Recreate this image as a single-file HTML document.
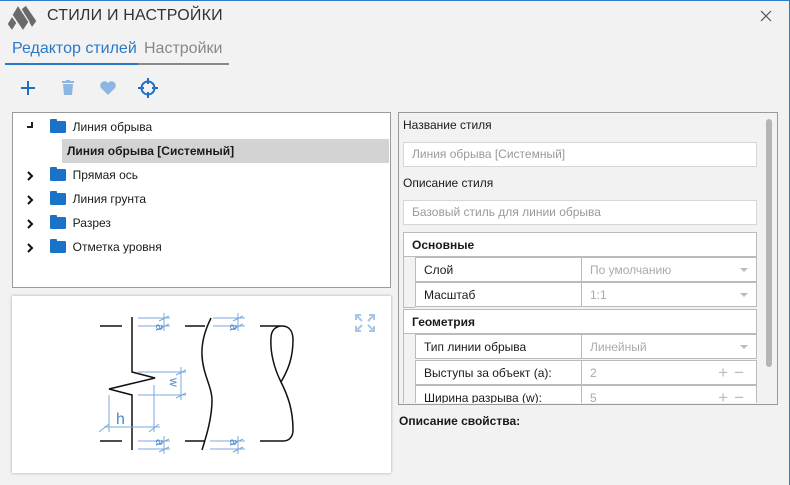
<!DOCTYPE html>
<html><head><meta charset="utf-8"><style>
*{box-sizing:border-box;margin:0;padding:0}
body{width:790px;height:485px;overflow:hidden;background:#f3f2f3;font-family:"Segoe UI","Liberation Sans",sans-serif;font-size:12px;color:#1a1a1a;position:relative}
.win{position:absolute;left:0;top:0;width:790px;height:485px;border-right:1px solid #2b7bd0;border-top:1px solid #2b7bd0}
.abs{position:absolute}
.row{position:absolute;left:0;height:24px;line-height:24px;white-space:nowrap}
.fold{display:inline-block;width:16px;height:12px;background:#1a73c9;border-radius:1px;vertical-align:middle;position:relative;top:-1px}
.fold:before{content:"";position:absolute;left:0;top:-2px;width:7px;height:3px;background:#1a73c9;border-radius:1px 1px 0 0}
.chev{display:inline-block;width:25px;vertical-align:middle}
.inp{position:absolute;left:403px;width:354px;height:25px;border:1px solid #d6d6d6;background:#fff;color:#999;padding-left:8px;line-height:23px}
.lbl{position:absolute;left:403px}
.cell{position:absolute;height:25px;line-height:24px;border:1px solid #bbb;background:#fff;padding-left:8px;white-space:nowrap;overflow:hidden}
.v{color:#aaa}
.arr{position:absolute;right:8px;top:10px;width:0;height:0;border-left:4px solid transparent;border-right:4px solid transparent;border-top:4px solid #bbb}
.pm{position:absolute;right:6px;top:0;color:#bbb;font-size:17px;letter-spacing:6px}
</style></head><body>
<div class="win"></div>
<!-- logo -->
<svg class="abs" style="left:0;top:0" width="42" height="34" viewBox="0 0 42 34">
<g fill="#6a6a6a" stroke="#f3f2f3" stroke-width="1.2" stroke-linejoin="round">
<polygon points="21,9 26,5 37,21 32,28"/>
<polygon points="12,15 18,5 29,22 23,31"/>
<polygon points="7,24 12,16 17,23 12,31"/>
</g>
</svg>
<div class="abs" style="left:47px;top:7px;font-size:16px;color:#333;letter-spacing:0.2px">СТИЛИ И НАСТРОЙКИ</div>
<svg class="abs" style="left:760px;top:10px" width="12" height="12"><path d="M1 1L11 11M11 1L1 11" stroke="#555" stroke-width="1.2"/></svg>
<!-- tabs -->
<div class="abs" style="left:12px;top:40px;font-size:16px;color:#2a79c9">Редактор стилей</div>
<div class="abs" style="left:144px;top:40px;font-size:16px;color:#888">Настройки</div>
<div class="abs" style="left:5px;top:63px;width:133px;height:2px;background:#2a79c9"></div>
<div class="abs" style="left:138px;top:63px;width:91px;height:2px;background:#888"></div>
<!-- toolbar -->
<svg class="abs" style="left:20px;top:80px" width="16" height="16"><path d="M8 1V15M1 8H15" stroke="#1f6fc2" stroke-width="2"/></svg>
<svg class="abs" style="left:61px;top:80px" width="14" height="16"><rect x="1" y="1" width="12" height="2" fill="#8db6e3"/><rect x="5" y="0" width="4" height="2" fill="#8db6e3"/><path d="M2 4H12L11 15H3Z" fill="#8db6e3"/></svg>
<svg class="abs" style="left:99px;top:81px" width="18" height="15"><path d="M9 14L2 7A4 4 0 0 1 9 2A4 4 0 0 1 16 7Z" fill="#8db6e3"/></svg>
<svg class="abs" style="left:138px;top:78px" width="20" height="20"><circle cx="10" cy="10" r="6.5" fill="none" stroke="#1f6fc2" stroke-width="2"/><path d="M10 0V6M10 14V20M0 10H6M14 10H20" stroke="#1f6fc2" stroke-width="2"/></svg>
<!-- tree -->
<div class="abs" style="left:12px;top:112px;width:379px;height:176px;background:#fff;border:1px solid #9a9a9a">
 <div class="abs" style="left:49px;top:26px;width:327px;height:24px;background:#d3d3d3"></div>
 <svg class="abs" style="left:12px;top:6px" width="10" height="10"><path d="M7 3V8H2" stroke="#222" stroke-width="2" fill="none"/></svg>
 <div class="row" style="top:2px;left:37px"><span class="fold"></span>&nbsp; Линия обрыва</div>
 <div class="row" style="top:26px;left:54px;font-weight:bold">Линия обрыва [Системный]</div>
 <div class="row" style="top:50px;left:12px"><svg class="chev" width="25" height="10"><path d="M3 1L7 5L3 9" stroke="#111" stroke-width="2" fill="none"/></svg><span class="fold"></span>&nbsp; Прямая ось</div>
 <div class="row" style="top:74px;left:12px"><svg class="chev" width="25" height="10"><path d="M3 1L7 5L3 9" stroke="#111" stroke-width="2" fill="none"/></svg><span class="fold"></span>&nbsp; Линия грунта</div>
 <div class="row" style="top:98px;left:12px"><svg class="chev" width="25" height="10"><path d="M3 1L7 5L3 9" stroke="#111" stroke-width="2" fill="none"/></svg><span class="fold"></span>&nbsp; Разрез</div>
 <div class="row" style="top:122px;left:12px"><svg class="chev" width="25" height="10"><path d="M3 1L7 5L3 9" stroke="#111" stroke-width="2" fill="none"/></svg><span class="fold"></span>&nbsp; Отметка уровня</div>
</div>
<!-- preview -->
<div class="abs" style="left:12px;top:296px;width:379px;height:177px;background:#fff;box-shadow:0 0 3px rgba(0,0,0,.3)"></div>
<svg class="abs" style="left:0;top:0" width="400" height="485">
<g stroke="#111" stroke-width="1.5" fill="none">
<path d="M100 326H122M132 317V372L155 378L109 389L132 395V450M100 441H122"/>
<path d="M185 326H205M185 441H205M211 318C190 360 212 380 212 400C212 420 205 440 202 450"/>
<path d="M260 326H282C290 326 293 332 293 340C293 358 288 370 281 382C274 368 270 352 271 338C271 330 276 326 282 326"/>
<path d="M281 382C288 396 293 410 293 430C293 437 289 441 283 441H260"/>
</g>
<g stroke="#7aa8dc" stroke-width="1" fill="none">
<path d="M138 318H170M138 326H170M164 313V331M159 321L169 316M159 329L169 324"/>
<path d="M138 441H170M138 449H170M164 436V454M159 444L169 439M159 452L169 447"/>
<path d="M213 318H245M213 326H245M238 313V331M233 321L243 316M233 329L243 324"/>
<path d="M210 441H245M210 449H245M238 436V454M233 444L243 439M233 452L243 447"/>
<path d="M138 372H186M138 395H186M181 367V400M176 375L186 370M176 398L186 393"/>
<path d="M109 395V432M154 385V432M104 427H160M99 432L109 424M149 432L159 424"/>
</g>
<g fill="#4a86cc" font-family="Liberation Sans" font-size="12">
<text x="148" y="328" transform="rotate(90 154 330)">a</text>
<text x="148" y="443" transform="rotate(90 154 445)">a</text>
<text x="222" y="328" transform="rotate(90 228 330)">a</text>
<text x="222" y="443" transform="rotate(90 228 445)">a</text>
<text x="166" y="386" transform="rotate(90 172 384)">w</text>
<text x="116" y="424" font-size="16">h</text>
</g>
<g stroke="#a8c6ea" stroke-width="2" fill="none">
<path d="M356 320V315H361M374 320V315H369M356 326V331H361M374 326V331H369M357 316L362 321M373 316L368 321M357 330L362 325M373 330L368 325"/>
</g>
</svg>
<!-- right panel -->
<div class="abs" style="left:398px;top:112px;width:380px;height:293px;background:#f3f2f3;border:1px solid #9a9a9a"></div>
<div class="abs" style="left:766px;top:119px;width:6px;height:248px;background:#b5b5b5;border-radius:3px"></div>
<div class="lbl" style="top:118px">Название стиля</div>
<div class="inp" style="top:142px">Линия обрыва [Системный]</div>
<div class="lbl" style="top:176px">Описание стиля</div>
<div class="inp" style="top:200px">Базовый стиль для линии обрыва</div>
<div class="cell" style="left:403px;top:232px;width:354px;font-weight:bold">Основные</div>
<div class="cell" style="left:415px;top:257px;width:167px">Слой</div>
<div class="cell v" style="left:581px;top:257px;width:176px">По умолчанию<span class="arr"></span></div>
<div class="cell" style="left:415px;top:282px;width:167px">Масштаб</div>
<div class="cell v" style="left:581px;top:282px;width:176px">1:1<span class="arr"></span></div>
<div class="cell" style="left:403px;top:309px;width:354px;font-weight:bold">Геометрия</div>
<div class="cell" style="left:415px;top:334px;width:167px">Тип линии обрыва</div>
<div class="cell v" style="left:581px;top:334px;width:176px">Линейный<span class="arr"></span></div>
<div class="cell" style="left:415px;top:360px;width:167px">Выступы за объект (a):</div>
<div class="cell v" style="left:581px;top:360px;width:176px">2<span class="pm">+−</span></div>
<div class="abs" style="left:403px;top:385px;width:354px;height:18px;overflow:hidden">
 <div class="cell" style="left:12px;top:0;width:167px">Ширина разрыва (w):</div>
 <div class="cell v" style="left:178px;top:0;width:176px">5<span class="pm">+−</span></div>
 <div class="abs" style="left:0;top:0;width:12px;height:18px;border-left:1px solid #bbb"></div>
</div>
<div class="abs" style="left:403px;top:257px;width:12px;height:51px;border-left:1px solid #bbb;border-bottom:1px solid #bbb"></div>
<div class="abs" style="left:403px;top:334px;width:12px;height:52px;border-left:1px solid #bbb"></div>
<div class="abs" style="left:399px;top:414px;font-weight:bold">Описание свойства:</div>
</body></html>
